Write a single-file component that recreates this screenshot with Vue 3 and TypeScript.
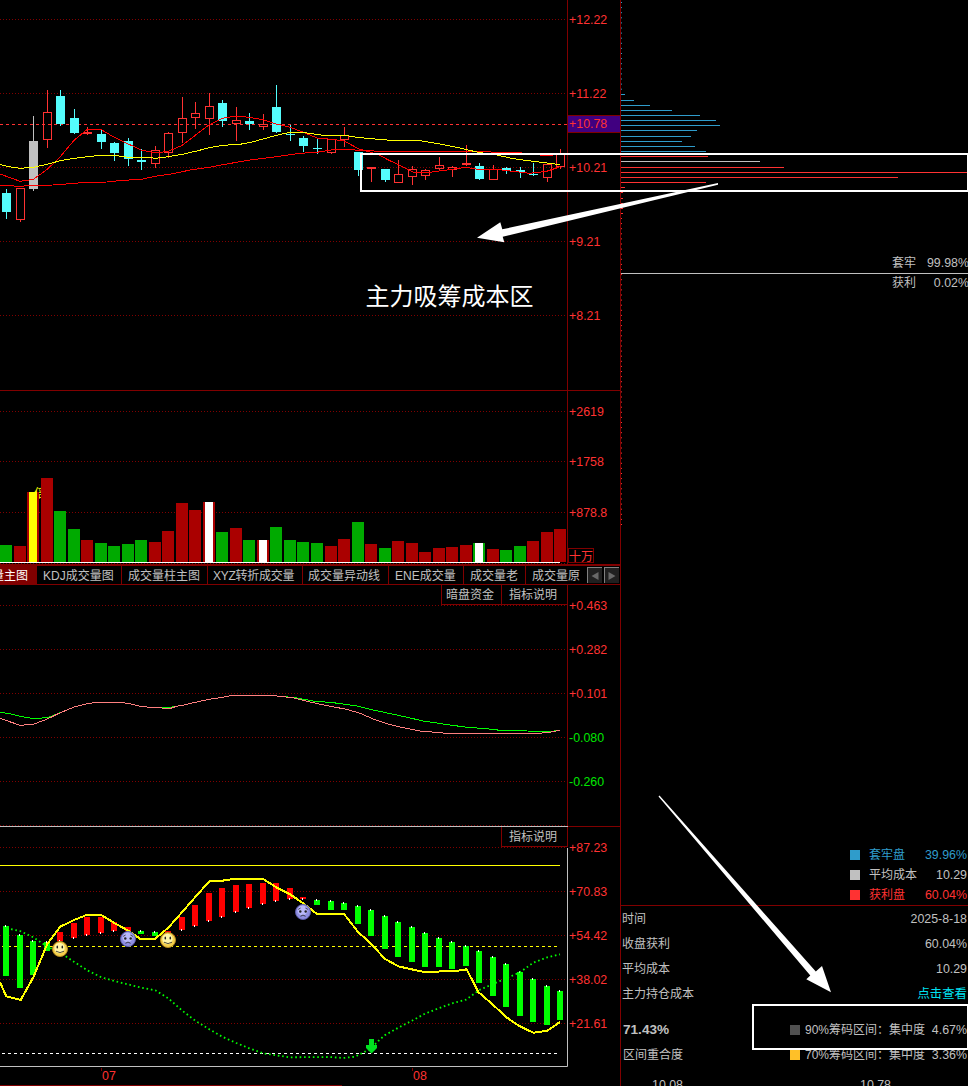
<script setup lang="ts">
type Pt = [number, number]
type Candle = [string, number, number, number, number]
type Bar = [string, number, number]

const xs = [6, 20, 33, 47, 60, 74, 87, 101, 114, 128, 141, 155, 168, 182, 195, 209, 222, 236, 249, 263, 276, 290, 303, 317, 331, 344, 358, 371, 385, 398, 412, 425, 439, 452, 466, 479, 493, 506, 520, 533, 547, 560]

// kind, high, body top, body bottom, low
const candles: Candle[] = [
  ['down', 189, 193, 212, 219], ['up', 188, 188, 220, 222], ['mark', 116, 141, 189, 191], ['up', 90, 112, 140, 148],
  ['down', 90, 96, 124, 126], ['down', 109, 118, 133, 134], ['up', 127, 132, 134, 135], ['down', 130, 134, 142, 149],
  ['down', 142, 143, 153, 161], ['down', 138, 141, 159, 166], ['down', 149, 160, 162, 170], ['up', 146, 150, 164, 168],
  ['up', 132, 133, 153, 158], ['up', 97, 118, 133, 143], ['up', 102, 113, 118, 129], ['up', 93, 106, 119, 135],
  ['down', 100, 103, 121, 127], ['up', 107, 120, 124, 141], ['down', 113, 121, 124, 130], ['up', 114, 124, 127, 130],
  ['down', 85, 107, 132, 133], ['down', 125, 134, 135, 141], ['down', 136, 138, 146, 152], ['down', 138, 148, 149, 154],
  ['up', 139, 139, 153, 154], ['up', 127, 135, 140, 147], ['down', 152, 152, 170, 176], ['up', 167, 167, 169, 182],
  ['down', 169, 169, 180, 182], ['up', 160, 174, 183, 183], ['up', 166, 169, 177, 185], ['up', 169, 170, 176, 180],
  ['up', 157, 165, 169, 171], ['up', 166, 167, 170, 177], ['up', 145, 163, 165, 166], ['down', 163, 166, 179, 180],
  ['up', 165, 169, 180, 180], ['down', 167, 168, 171, 174], ['down', 167, 170, 172, 178], ['down', 163, 174, 175, 176],
  ['up', 163, 164, 178, 182], ['up', 149, 154, 167, 169],
]

const volumes: [string, number, string?][] = [
  ['g', 545], ['r', 546], ['r', 492, 'y'], ['r', 478], ['g', 511], ['g', 529], ['r', 540], ['g', 543], ['g', 546], ['g', 544],
  ['g', 540], ['r', 542], ['r', 531], ['r', 503], ['r', 510], ['r', 502, 'w'], ['g', 532], ['r', 528], ['g', 540], ['r', 540, 'w'],
  ['g', 527], ['g', 540], ['g', 542], ['g', 543], ['r', 546], ['r', 539], ['g', 522], ['r', 544], ['g', 548], ['r', 541],
  ['r', 543], ['r', 552], ['r', 548], ['r', 547], ['r', 545], ['g', 543, 'w'], ['r', 549], ['g', 550], ['g', 546], ['r', 541],
  ['r', 532], ['r', 529],
]

const oscBars: Bar[] = [
  ['g', 926, 976], ['g', 935, 988], ['g', 941, 975], ['g', 942, 951], ['r', 932, 941], ['r', 923, 938], ['r', 917, 935], ['r', 917, 933],
  ['r', 922, 931], ['r', 927, 931], ['g', 931, 934], ['g', 932, 936], ['r', 931, 933], ['r', 917, 930], ['r', 905, 926], ['r', 893, 921],
  ['r', 888, 917], ['r', 885, 912], ['r', 884, 908], ['r', 883, 904], ['r', 883, 901], ['r', 888, 899], ['r', 897, 899], ['g', 900, 905],
  ['g', 901, 910], ['g', 903, 910], ['g', 906, 924], ['g', 910, 936], ['g', 916, 949], ['g', 922, 957], ['g', 927, 962], ['g', 933, 967],
  ['g', 938, 967], ['g', 942, 969], ['g', 946, 966], ['g', 951, 983], ['g', 957, 996], ['g', 964, 1007], ['g', 972, 1016], ['g', 979, 1022],
  ['g', 986, 1025], ['g', 991, 1020],
]

// Points are kept in thirds of a pixel relative to a block origin.
const thirds = (ox: number, oy: number, pts: Pt[]): string =>
  pts.map(([x, y]) => `${(ox + x / 3).toFixed(1)},${(oy + y / 3).toFixed(1)}`).join(' ')

const maMid = thirds(0, 70, [[0, 283], [20, 289], [60, 295], [100, 292], [142, 283], [181, 272], [223, 265], [262, 260], [290, 257], [350, 257], [385, 262], [440, 262], [466, 265], [505, 260], [547, 253], [590, 243], [628, 233], [670, 226], [720, 223], [760, 215], [800, 204], [829, 196], [860, 189], [915, 188], [970, 196], [1040, 197], [1080, 203], [1170, 211], [1255, 211], [1320, 222], [1380, 234], [1430, 246], [1490, 255], [1540, 266], [1600, 274], [1680, 284]])
const maFast = thirds(0, 70, [[0, 312], [60, 334], [100, 328], [142, 298], [181, 260], [223, 210], [262, 178], [304, 179], [343, 202], [385, 222], [424, 240], [466, 249], [505, 244], [547, 226], [586, 196], [628, 164], [667, 145], [709, 138], [748, 142], [790, 149], [829, 162], [871, 172], [910, 187], [952, 204], [994, 208], [1033, 213], [1075, 236], [1130, 252], [1170, 272], [1210, 292], [1240, 307], [1290, 307], [1340, 300], [1400, 292], [1438, 299], [1490, 298], [1530, 303], [1590, 310], [1640, 304], [1681, 290]])
const maSlow = thirds(0, 70, [[0, 346], [60, 349], [100, 346], [160, 345], [210, 341], [260, 337], [320, 336], [370, 331], [424, 328], [470, 318], [520, 311], [570, 300], [628, 292], [680, 282], [750, 270], [829, 260], [900, 250], [950, 247], [994, 240], [1030, 238], [1080, 241], [1140, 244], [1400, 245], [1540, 247], [1600, 252], [1625, 256], [1660, 257]])

const flowPink = thirds(0, 680, [[0, 115], [60, 136], [100, 133], [142, 117], [181, 98], [223, 81], [262, 71], [290, 67], [360, 67], [390, 71], [420, 79], [450, 82], [480, 82], [490, 85], [512, 85], [530, 79], [547, 76], [586, 67], [628, 58], [667, 52], [700, 46], [810, 46], [850, 50], [880, 53], [905, 60], [940, 68], [990, 79], [1040, 88], [1080, 100], [1120, 117], [1160, 131], [1210, 143], [1260, 153], [1340, 160], [1615, 160], [1650, 157], [1680, 151]])
const flowGreen = thirds(0, 680, [[0, 97], [30, 101], [60, 109], [95, 115], [120, 115], [147, 111], [181, 98], [223, 81], [262, 71], [290, 67], [360, 67], [390, 71], [420, 79], [450, 82], [480, 82], [515, 81], [547, 76], [586, 67], [628, 58], [667, 52], [700, 46], [810, 46], [850, 50], [880, 52], [900, 56], [940, 63], [1000, 68], [1070, 78], [1110, 88], [1190, 105], [1270, 123], [1330, 132], [1400, 142], [1460, 146], [1500, 151], [1580, 153], [1655, 154], [1680, 151]])

const oscLine = thirds(0, 860, [[0, 367], [19, 409], [62, 420], [100, 352], [142, 252], [181, 200], [220, 181], [262, 164], [304, 165], [343, 189], [385, 212], [420, 236], [466, 236], [505, 203], [547, 156], [586, 111], [628, 64], [667, 62], [700, 57], [790, 57], [829, 82], [870, 103], [910, 130], [952, 163], [1033, 163], [1075, 217], [1112, 250], [1154, 296], [1195, 319], [1240, 329], [1270, 335], [1315, 335], [1330, 332], [1375, 332], [1400, 328], [1435, 396], [1480, 435], [1518, 471], [1558, 498], [1600, 518], [1642, 512], [1680, 486]])
const oscDots = thirds(0, 860, [[20, 205], [60, 213], [100, 232], [142, 260], [181, 278], [223, 306], [262, 331], [304, 352], [343, 363], [424, 383], [466, 391], [505, 415], [547, 452], [586, 482], [628, 508], [667, 530], [709, 549], [748, 565], [790, 580], [829, 586], [870, 592], [990, 591], [1030, 594], [1065, 590], [1112, 566], [1135, 543], [1154, 526], [1195, 503], [1236, 482], [1275, 461], [1316, 445], [1357, 430], [1398, 419], [1438, 390], [1480, 372], [1518, 355], [1558, 338], [1600, 308], [1642, 292], [1680, 283]])

const priceTicks: [number, string][] = [[19, '+12.22'], [93, '+11.22'], [167, '+10.21'], [241, '+9.21'], [315, '+8.21']]
const volTicks: [number, string][] = [[411, '+2619'], [461, '+1758'], [512, '+878.8']]
const flowTicks: [number, string][] = [[605, '+0.463'], [649, '+0.282'], [693, '+0.101'], [737, '-0.080'], [781, '-0.260']]
const oscTicks: [number, string][] = [[847, '+87.23'], [891, '+70.83'], [935, '+54.42'], [979, '+38.02'], [1023, '+21.61']]

const tabs = [
  { name: '量主图', cls: 't0' }, { name: 'KDJ成交量图', cls: 't1' }, { name: '成交量柱主图', cls: 't2' }, { name: 'XYZ转折成交量', cls: 't3' },
  { name: '成交量异动线', cls: 't4' }, { name: 'ENE成交量', cls: 't5' }, { name: '成交量老', cls: 't6' }, { name: '成交量原', cls: 't7' },
]

// cost distribution: y, right end, tone
const chips: [number, number, string][] = [
  [94, 625, 'b'], [100, 634, 'b'], [105, 650, 'b'], [110, 672, 'b'], [115, 700, 'b'], [120, 716, 'b'], [125, 720, 'b'], [130, 697, 'b'],
  [136, 691, 'b'], [141, 682, 'b'], [146, 695, 'b'], [151, 706, 'b'], [156, 708, 'r'], [161, 760, 's'], [167, 784, 'r'], [172, 967, 'r'],
  [177, 898, 'r'], [182, 706, 'r'], [187, 625, 'r'], [192, 623, 'r'], [198, 623, 'r'], [203, 623, 'r'], [208, 623, 'r'], [213, 623, 'r'],
]

const happy: Pt[] = [[60, 949], [168, 940]]
const sad: Pt[] = [[128, 939], [303, 912]]

const legend = [
  { tone: 'b', name: '套牢盘', value: '39.96%' },
  { tone: 's', name: '平均成本', value: '10.29' },
  { tone: 'r', name: '获利盘', value: '60.04%' },
]
const facts = [
  { name: '时间', value: '2025-8-18', link: false },
  { name: '收盘获利', value: '60.04%', link: false },
  { name: '平均成本', value: '10.29', link: false },
  { name: '主力持仓成本', value: '点击查看', link: true },
]
</script>

<template>
  <main class="screen">
    <div class="charts">
      <svg class="pane price" viewBox="0 0 621 390" width="621" height="390">
        <line v-for="t in priceTicks" :key="t[1]" class="grid" x1="0" x2="566" :y1="t[0] + 0.5" :y2="t[0] + 0.5" />
        <path class="frame" d="M567.5 0V390M620.5 0V390" />
        <path class="last" d="M0 124.5H567" />
        <rect class="badge" x="567.5" y="115.5" width="53" height="17" />
        <g v-for="(c, i) in candles" :key="i" :class="c[0]">
          <rect class="wick" :x="xs[i]" :y="c[1]" width="1" :height="Math.max(0, c[2] - c[1])" />
          <rect class="wick" :x="xs[i]" :y="c[3]" width="1" :height="Math.max(0, c[4] - c[3])" />
          <rect v-if="c[0] === 'up'" class="hollow" :x="xs[i] - 3.5" :y="c[2] + 0.5" width="8" :height="Math.max(1, c[3] - c[2] - 1)" />
          <rect v-else class="wick" :x="xs[i] - 4" :y="c[2]" width="9" :height="c[3] - c[2]" />
        </g>
        <polyline class="line red" :points="maSlow" />
        <polyline class="line red" :points="maFast" />
        <polyline class="line yellow" :points="maMid" />
        <text v-for="t in priceTicks" :key="'l' + t[1]" class="tick" x="569" :y="t[0] + 5">{{ t[1] }}</text>
        <text class="tick" x="569" y="128">+10.78</text>
      </svg>

      <svg class="pane volume" viewBox="0 390 621 174" width="621" height="174">
        <line v-for="t in volTicks" :key="t[1]" class="grid" x1="0" x2="566" :y1="t[0] + 0.5" :y2="t[0] + 0.5" />
        <path class="frame" d="M0 390.5H620M567.5 390V564M620.5 390V564" />
        <text class="signal" x="34" y="498">倍</text>
        <g v-for="(v, i) in volumes" :key="i">
          <rect :class="'v' + v[0]" :x="xs[i] - 6" :y="v[1]" width="12" :height="562 - v[1]" />
          <rect v-if="v[2]" :class="'v' + v[2]" :x="xs[i] - 4" :y="v[1]" width="8" :height="562 - v[1]" />
        </g>
        <path class="base" d="M0 562.5H560" />
        <path class="grid" d="M0 563.5H567" />
        <rect class="unit" x="568.5" y="548.5" width="25" height="14" />
        <text class="tick cjk" x="569" y="560.500">十万</text>
        <text v-for="t in volTicks" :key="'l' + t[1]" class="tick" x="569" :y="t[0] + 5">{{ t[1] }}</text>
      </svg>

      <nav class="tabs">
        <span v-for="t in tabs" :key="t.cls" class="tab" :class="t.cls">{{ t.name }}</span>
        <button class="arrow" type="button"><svg width="14" height="15"><path d="M10.500 4v8L3.500 8z" /></svg></button>
        <button class="arrow" type="button"><svg width="14" height="15"><path d="M3.500 4v8L10.500 8z" /></svg></button>
      </nav>

      <section class="flow">
        <svg class="pane" viewBox="0 585 621 241" width="621" height="241">
          <line v-for="t in flowTicks" :key="t[1]" class="grid" x1="0" x2="566" :y1="t[0] + 0.5" :y2="t[0] + 0.5" />
          <path class="grid" d="M0 825.5H566" />
          <path class="frame" d="M567.5 585V826M620.5 585V826" />
          <polyline class="line green" :points="flowGreen" />
          <polyline class="line pink" :points="flowPink" />
          <text v-for="t in flowTicks" :key="'l' + t[1]" class="tick" :class="{ neg: t[1][0] === '-' }" x="569" :y="t[0] + 5">{{ t[1] }}</text>
        </svg>
        <div class="tools"><span class="tool wide">暗盘资金</span><span class="tool">指标说明</span></div>
      </section>

      <section class="flow">
        <svg class="pane" viewBox="0 826 621 260" width="621" height="260">
          <line v-for="t in oscTicks" :key="t[1]" class="grid" x1="0" x2="566" :y1="t[0] + 0.5" :y2="t[0] + 0.5" />
          <path class="frame" d="M567 826.5H620M567.5 826V847M620.5 826V1086M0 1085.5H342M101.5 1068V1071M412.5 1068V1071" />
          <path class="silver" d="M0 826.5H568M567.5 848V1066.5H0" />
          <path class="line yellow" d="M0 865.5H560" />
          <path class="dash-y" d="M2 946.5H558" />
          <path class="dash-w" d="M2 1053.5H558" />
          <g v-for="(b, i) in oscBars" :key="i">
            <rect :class="'o' + b[0]" :x="xs[i] - 3" :y="b[1]" width="6" :height="b[2] - b[1]" />
            <rect class="vw" :x="xs[i] - 1" :y="(b[0] === 'g' ? b[1] : b[2]) - 1" width="1" height="2" />
          </g>
          <polyline class="dots" :points="oscDots" />
          <polyline class="line yellow thick" :points="oscLine" />
          <path class="mark-down" d="M369 1039h5v6h3v3l-5.500 5.500-5.500-5.500v-3h3z" />
          <g v-for="p in happy" :key="'h' + p[0]" :transform="`translate(${p[0]} ${p[1]})`">
            <circle class="sun" r="7.5" />
            <circle class="sun-in" cx="-0.5" cy="-1" r="5.2" />
            <ellipse class="eye" cx="-2.7" cy="-2" rx="0.8" ry="1.5" /><ellipse class="eye" cx="2.3" cy="-2" rx="0.8" ry="1.5" />
            <path class="smile" d="M-4 2.200Q0 5 4 2.200" />
          </g>
          <g v-for="p in sad" :key="'s' + p[0]" :transform="`translate(${p[0]} ${p[1]})`">
            <circle class="moon" r="7.5" />
            <circle class="moon-in" cx="-0.5" cy="-1.5" r="5" />
            <circle class="eye" cx="-2.7" cy="-0.5" r="1.2" /><circle class="eye" cx="2.7" cy="-0.5" r="1.2" />
            <path class="smile" d="M-4.8-2.6L-2.4-4M4.8-2.6L2.4-4M-2.5 4.3Q0 1.8 2.5 4.3" />
          </g>
          <text v-for="t in oscTicks" :key="'l' + t[1]" class="tick" x="569" :y="t[0] + 5">{{ t[1] }}</text>
          <text class="tick" x="102" y="1080">07</text>
          <text class="tick" x="413" y="1080">08</text>
        </svg>
        <div class="tools"><span class="tool">指标说明</span></div>
      </section>
    </div>

    <aside class="side">
      <section class="profile">
        <svg class="pane" viewBox="621 0 347 845" width="347" height="845">
          <path class="chip-dots b" d="M621.5 2V92" />
          <path class="chip-dots r" d="M621.5 218V525" />
          <path v-for="c in chips" :key="c[0]" :class="'chip ' + c[2]" :d="`M621 ${c[0] + 0.5}H${c[1]}`" />
          <path class="silver" d="M621 273.5H968" />
        </svg>
        <dl class="stats">
          <div><dt>套牢</dt><dd>99.98%</dd></div>
          <div><dt>获利</dt><dd>0.02%</dd></div>
        </dl>
      </section>
      <ul class="legend">
        <li v-for="l in legend" :key="l.name" :class="l.tone"><i></i><span>{{ l.name }}</span><b>{{ l.value }}</b></li>
      </ul>
      <div class="facts">
        <div v-for="f in facts" :key="f.name" class="row"><span>{{ f.name }}</span><span :class="{ link: f.link }">{{ f.value }}</span></div>
      </div>
      <div class="ranges">
        <div class="row"><strong>71.43%</strong><span class="range"><i></i><em>90%筹码区间：集中度</em><span>4.67%</span></span></div>
        <div class="row"><span>区间重合度</span><span class="range amber"><i></i><em>70%筹码区间：集中度</em><span>3.36%</span></span></div>
        <div class="scale"><span>10.08</span><span>10.78</span></div>
      </div>
    </aside>

    <svg class="notes" viewBox="0 0 968 1086" width="968" height="1086">
      <path class="box" d="M969 154H361V191H969M968 154V191" />
      <path class="box" d="M969 1005H753V1049H969M968 1005V1049" />
      <path class="pointer" d="M477 237.7L500.3 222.3 502.3 229.3 718 183V184.7L502.7 236.7 504.3 242.3z" />
      <path class="pointer" d="M831 992.3L822 966 815.8 971.5 659.5 795.5 658.5 796.5 810.3 975.5 806.3 979.3z" />
      <text class="caption" x="365.5" y="305">主力吸筹成本区</text>
    </svg>
  </main>
</template>

<style>
body {
  background: #000;
}
</style>

<style scoped>
.screen {
  position: relative;
  display: flex;
  width: 968px;
  height: 1086px;
  overflow: hidden;
  background: #000;
  color: #c0c0c0;
  font: 12px/16px "Liberation Sans", "Noto Sans CJK SC", sans-serif;
}
.charts {
  width: 621px;
  flex: none;
}
.pane {
  display: block;
}
.grid {
  stroke: #800000;
  stroke-dasharray: 1 2;
  fill: none;
}
.frame {
  stroke: #800000;
  fill: none;
}
.silver {
  stroke: #c0c0c0;
  fill: none;
}
.last {
  stroke: #ff3232;
  stroke-dasharray: 3 3;
}
.badge {
  fill: #400080;
  stroke: #800000;
}
.tick {
  fill: #ff3232;
  font-size: 12.4px;
}
.tick.neg {
  fill: #00e600;
}
.tick.cjk {
  font-size: 12px;
}
.up .wick {
  fill: #ff3232;
}
.hollow {
  fill: none;
  stroke: #ff3232;
}
.down .wick {
  fill: #54fcfc;
}
.mark .wick {
  fill: #c0c0c0;
}
.line {
  fill: none;
  stroke-width: 1;
  shape-rendering: crispEdges;
}
.red {
  stroke: #f00;
}
.yellow {
  stroke: #ff0;
}
.green {
  stroke: #0f0;
}
.pink {
  stroke: #ff8080;
}
.thick {
  stroke-width: 2;
}
.signal {
  fill: #ff0;
  font-size: 12px;
}
.vr {
  fill: #a00;
}
.vg {
  fill: #0a0;
}
.vy {
  fill: #ff0;
}
.vw {
  fill: #fff;
}
.or {
  fill: #f00;
}
.og {
  fill: #0f0;
}
.base {
  stroke: #fff;
}
.unit {
  fill: none;
  stroke: #800000;
}
.dash-y {
  stroke: #ff0;
  stroke-dasharray: 3 3;
}
.dash-w {
  stroke: #fff;
  stroke-dasharray: 3 3;
}
.dots {
  fill: none;
  stroke: #0f0;
  stroke-width: 1.8;
  stroke-dasharray: 1.6 2.8;
}
.mark-down {
  fill: #00e020;
}
.sun {
  fill: #f3cf4d;
  stroke: #b58a1d;
}
.sun-in {
  fill: #fff6a8;
}
.moon {
  fill: #8f8fe0;
  stroke: #5c5ca8;
}
.moon-in {
  fill: #b9b9fa;
}
.eye {
  fill: #222;
}
.smile {
  fill: none;
  stroke: #222;
  stroke-width: 0.8;
}

.tabs {
  display: flex;
  box-sizing: border-box;
  width: 621px;
  height: 21px;
  border-top: 2px solid #800000;
  border-bottom: 1px solid #800000;
  border-right: 1px solid #800000;
}
.tab {
  box-sizing: border-box;
  flex: none;
  height: 18px;
  padding-left: 6px;
  border-right: 1px solid #800000;
  line-height: 20px;
  white-space: nowrap;
}
.t0 {
  display: flex;
  width: 37px;
  padding: 0 8px 0 0;
  justify-content: flex-end;
  background: #800000;
  color: #fff;
}
.t1 {
  width: 85px;
}
.t2 {
  width: 86px;
}
.t3 {
  width: 95px;
  padding-left: 5px;
  letter-spacing: -0.25px;
}
.t4 {
  width: 86px;
  padding-left: 5px;
}
.t5 {
  width: 75px;
}
.t6 {
  width: 62px;
}
.t7 {
  width: 61px;
  border-right: 0;
}
.arrow {
  box-sizing: border-box;
  width: 15px;
  height: 16px;
  margin: 1px 2px 0 0;
  padding: 0;
  border: solid #808080;
  border-width: 1px 0 0 1px;
  background: #202020;
  line-height: 0;
}
.arrow path {
  fill: #686868;
}

.flow {
  position: relative;
}
.tools {
  position: absolute;
  top: 0;
  right: 53px;
  display: flex;
}
.tool {
  box-sizing: border-box;
  width: 67px;
  height: 20px;
  padding-left: 7px;
  border: solid #800000;
  border-width: 0 1px 1px;
  background: #000;
  line-height: 21px;
}
.flow:last-child .tool {
  margin-top: 1px;
}
.tool.wide {
  width: 60px;
  padding-left: 4px;
  border-right: 0;
}

.side {
  width: 347px;
  overflow: hidden;
}
.profile {
  position: relative;
}
.chip,
.chip-dots {
  fill: none;
}
path.b {
  stroke: #2f9ccb;
}
path.r {
  stroke: #ff3232;
}
path.s {
  stroke: #c0c0c0;
}
.chip-dots {
  stroke-dasharray: 1 4.1;
}
.stats {
  position: absolute;
  left: 271px;
  top: 253px;
  margin: 0;
}
.stats div {
  display: flex;
  width: 77px;
  height: 20px;
  justify-content: space-between;
  line-height: 21px;
}
.stats dd {
  margin: 0;
}
.stats dd,
.legend b,
.row > span:last-child,
.scale {
  font-size: 12.4px;
}
.legend {
  margin: 0;
  padding: 0;
  list-style: none;
}
.legend li {
  display: flex;
  height: 20px;
  padding: 0 1px 0 229px;
  align-items: center;
}
.legend i,
.range i {
  flex: none;
  width: 10px;
  height: 10px;
  margin-right: 9px;
  background: currentColor;
}
.legend b {
  margin-left: auto;
  font-weight: 400;
}
li.b {
  color: #2f9ccb;
}
li.r {
  color: #ff3232;
}
.facts {
  border-top: 1px solid #800000;
}
.row {
  display: flex;
  height: 25px;
  padding: 0 1px;
  align-items: center;
  justify-content: space-between;
}
.row .link {
  color: #00e0f0;
  font-size: 12px;
}
.ranges {
  padding-top: 11px;
}
.row strong {
  padding-left: 1px;
  font-size: 13.6px;
}
.ranges .row > span:first-child {
  padding-left: 1px;
}
.range {
  display: flex;
  width: 177px;
  align-items: center;
}
.range i {
  margin-right: 5px;
  background: #505050;
}
.range.amber i {
  background: #ffc028;
}
.range em {
  flex: 1;
  font-size: 12px;
  font-style: normal;
  white-space: nowrap;
}
.scale {
  display: flex;
  padding: 10px 77px 0 31px;
  justify-content: space-between;
}

.notes {
  position: absolute;
  inset: 0;
}
.box {
  fill: none;
  stroke: #fff;
  stroke-width: 2;
}
.pointer {
  fill: #fff;
}
.caption {
  fill: #fff;
  font-family: "Noto Sans CJK SC", sans-serif;
  font-size: 24px;
}
</style>
